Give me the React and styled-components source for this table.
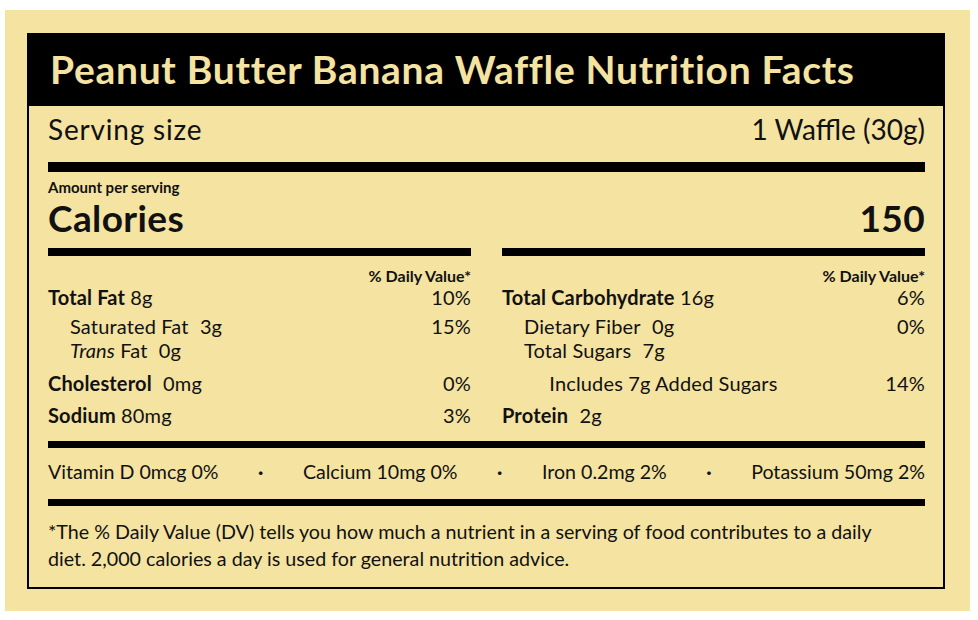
import React from 'react';
import styled, { createGlobalStyle } from 'styled-components';

const cream = '#f4e3a1';
const ink = '#111';

const GlobalStyle = createGlobalStyle`
  html, body {
    margin: 0;
    background: #fff;
  }
  body {
    font-family: Lato, 'Liberation Sans', sans-serif;
    color: ${ink};
  }
`;

const Card = styled.div`
  box-sizing: border-box;
  width: 965px;
  margin: 10px 0 0 5px;
  padding: 23px 25px 22px 22px;
  background: ${cream};
`;

const Label = styled.div`
  border: 2px solid #000;
  border-top: 0;
`;

const Header = styled.h1`
  margin: 0 -2px;
  padding: 0 0 0 23px;
  height: 73px;
  line-height: 73px;
  background: #000;
  color: ${cream};
  font-size: 39px;
  font-weight: 700;
  letter-spacing: 0.7px;
`;

const Body = styled.div`
  padding: 0 18px 15px 19px;
`;

const Rule = styled.div`
  height: ${props => props.thick}px;
  background: #000;
  margin-top: ${props => props.top || 0}px;
`;

const SplitRow = styled.div`
  display: flex;
  justify-content: space-between;
  align-items: baseline;
`;

const Serving = styled(SplitRow)`
  font-size: 28px;
  line-height: 46px;
`;

const ServingLabel = styled.span`
  letter-spacing: 0.8px;
`;

const AmountPer = styled.div`
  padding-top: 6px;
  font-size: 15px;
  font-weight: 700;
  line-height: 18px;
`;

const Calories = styled(SplitRow)`
  font-size: 37px;
  font-weight: 700;
  line-height: 44px;
  letter-spacing: 0.4px;
`;

const Columns = styled.div`
  display: grid;
  grid-template-columns: 1fr 1fr;
  column-gap: 31px;
  margin-top: 8px;
`;

const Column = styled.div``;

const DailyHead = styled.div`
  margin-top: 11px;
  text-align: right;
  font-size: 16px;
  font-weight: 700;
  line-height: 18px;
`;

const NutrientRow = styled(SplitRow)`
  margin-top: ${props => props.gap || 0}px;
  padding-left: ${props => (props.indent || 0) * 22}px;
  font-size: 20px;
  line-height: 24px;
  letter-spacing: 0.15px;
`;

const Name = styled.span`
  font-weight: ${props => (props.bold ? 700 : 400)};
  font-style: ${props => (props.italic ? 'italic' : 'normal')};
`;

const Amount = styled.span`
  margin-left: ${props => (props.wide ? 6 : 0)}px;
`;

const Vitamins = styled.div`
  display: flex;
  justify-content: space-between;
  margin-top: 12px;
  font-size: 19.6px;
  line-height: 24px;
`;

const Dot = styled.span`
  font-weight: 700;
`;

const Footnote = styled.p`
  margin: 12px 0 0;
  padding-right: 40px;
  font-size: 19.7px;
  line-height: 27px;
`;

const left = [
  { name: 'Total Fat', amount: '8g', dv: '10%', bold: true },
  { name: 'Saturated Fat', amount: '3g', dv: '15%', indent: 1, gap: 5, wide: true },
  { name: 'Trans', suffix: ' Fat', amount: '0g', indent: 1, italic: true, wide: true },
  { name: 'Cholesterol', amount: '0mg', dv: '0%', bold: true, gap: 9, wide: true },
  { name: 'Sodium', amount: '80mg', dv: '3%', bold: true, gap: 8 },
];

const right = [
  { name: 'Total Carbohydrate', amount: '16g', dv: '6%', bold: true },
  { name: 'Dietary Fiber', amount: '0g', dv: '0%', indent: 1, gap: 5, wide: true },
  { name: 'Total Sugars', amount: '7g', indent: 1, wide: true },
  { name: 'Includes 7g Added Sugars', dv: '14%', indent: 2.15, gap: 9 },
  { name: 'Protein', amount: '2g', bold: true, gap: 8, wide: true },
];

const vitamins = ['Vitamin D 0mcg 0%', 'Calcium 10mg 0%', 'Iron 0.2mg 2%', 'Potassium 50mg 2%'];

const renderColumn = rows => (
  <Column>
    <Rule thick={8} />
    <DailyHead>% Daily Value*</DailyHead>
    {rows.map(row => (
      <NutrientRow key={row.name} gap={row.gap} indent={row.indent}>
        <span>
          <Name bold={row.bold} italic={row.italic}>
            {row.name}
          </Name>
          {row.suffix}
          {row.amount && (
            <Amount wide={row.wide}>
              {' '}
              {row.amount}
            </Amount>
          )}
        </span>
        <span>{row.dv}</span>
      </NutrientRow>
    ))}
  </Column>
);

const App = () => (
  <>
    <GlobalStyle />
    <Card>
      <Label>
        <Header>Peanut Butter Banana Waffle Nutrition Facts</Header>
        <Body>
          <Serving>
            <ServingLabel>Serving size</ServingLabel>
            <span>1 Waffle (30g)</span>
          </Serving>
          <Rule thick={10} top={10} />
          <AmountPer>Amount per serving</AmountPer>
          <Calories>
            <span>Calories</span>
            <span>150</span>
          </Calories>
          <Columns>
            {renderColumn(left)}
            {renderColumn(right)}
          </Columns>
          <Rule thick={7} top={14} />
          <Vitamins>
            {vitamins.map((item, i) => (
              <React.Fragment key={item}>
                {i > 0 && <Dot>·</Dot>}
                <span>{item}</span>
              </React.Fragment>
            ))}
          </Vitamins>
          <Rule thick={7} top={15} />
          <Footnote>
            *The % Daily Value (DV) tells you how much a nutrient in a serving of food contributes to a daily diet.
            2,000 calories a day is used for general nutrition advice.
          </Footnote>
        </Body>
      </Label>
    </Card>
  </>
);

export default App;
